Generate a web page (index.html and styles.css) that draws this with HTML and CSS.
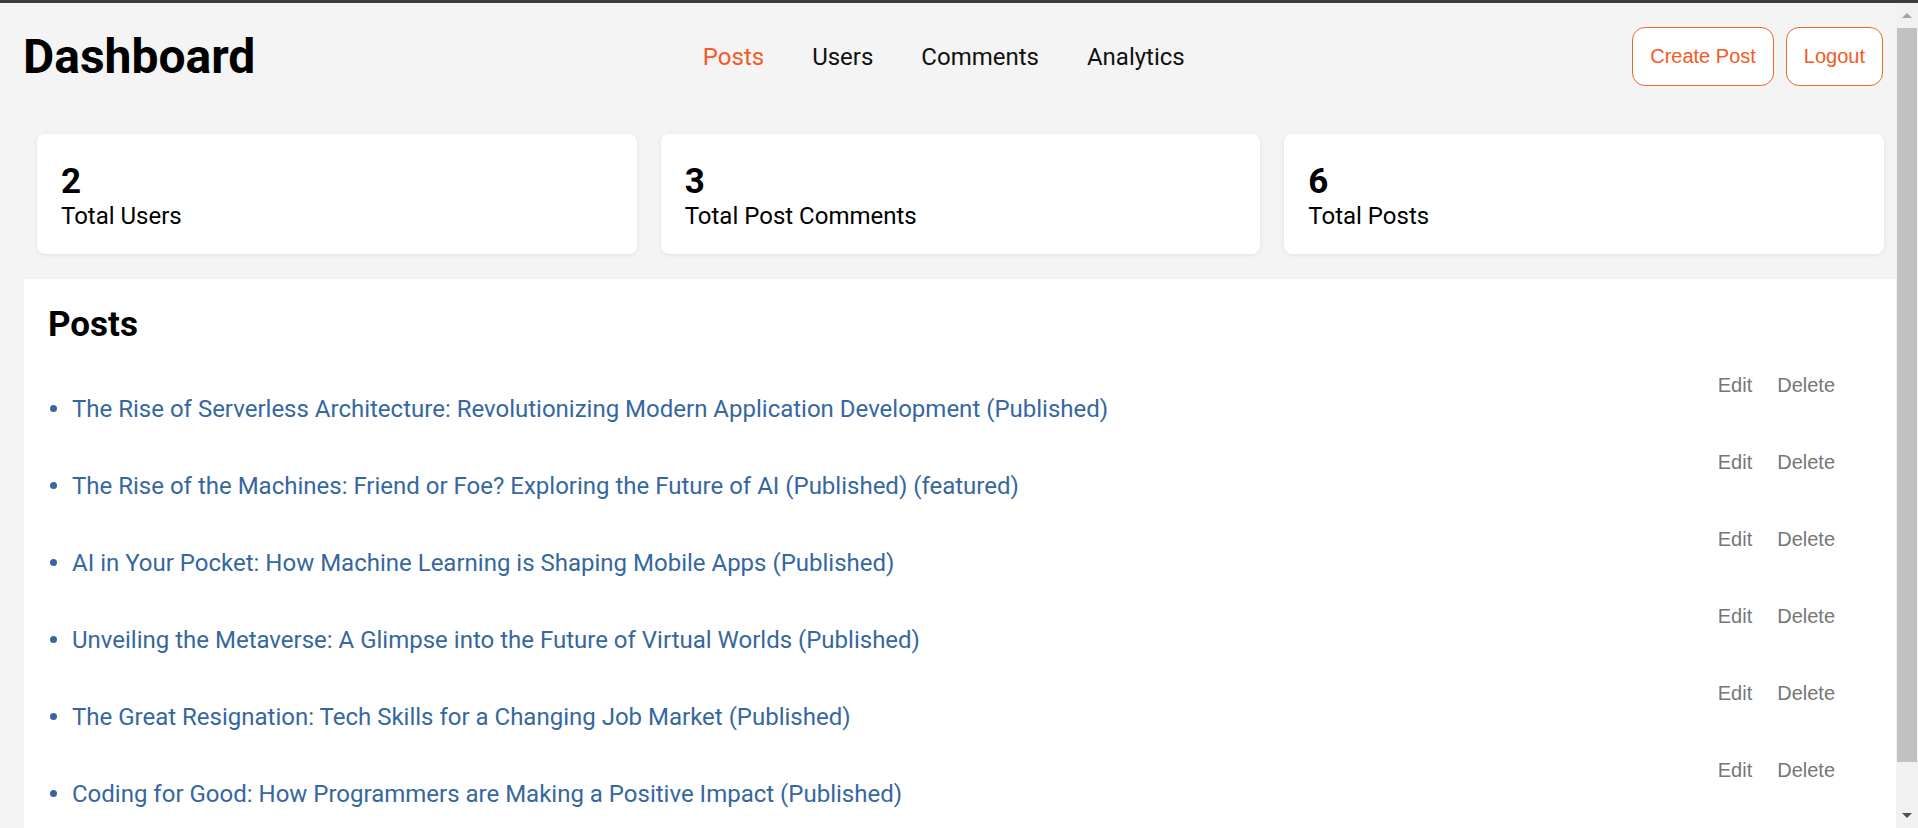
FILE: index.html
```html
<!DOCTYPE html>
<html lang="en">
<head>
<meta charset="utf-8">
<title>Dashboard</title>
<link rel="stylesheet" href="styles.css">
</head>
<body>
<div class="topbar"></div>
<div class="window">
  <div class="main">
    <header class="header">
      <h1 class="title">Dashboard</h1>
      <nav class="nav">
        <a class="nav-link active" href="#">Posts</a>
        <a class="nav-link" href="#">Users</a>
        <a class="nav-link" href="#">Comments</a>
        <a class="nav-link" href="#">Analytics</a>
      </nav>
      <div class="header-actions">
        <button class="btn-outline">Create Post</button>
        <button class="btn-outline">Logout</button>
      </div>
    </header>

    <section class="stats">
      <div class="stat-card"><div class="stat-num">2</div><div class="stat-label">Total Users</div></div>
      <div class="stat-card"><div class="stat-num">3</div><div class="stat-label">Total Post Comments</div></div>
      <div class="stat-card"><div class="stat-num">6</div><div class="stat-label">Total Posts</div></div>
    </section>

    <section class="panel">
      <h2 class="panel-title">Posts</h2>
      <ul class="post-list">
        <li class="post-item">
          <a class="post-title" href="#">The Rise of Serverless Architecture: Revolutionizing Modern Application Development (Published)</a>
          <div class="post-actions"><button class="btn-text">Edit</button><button class="btn-text">Delete</button></div>
        </li>
        <li class="post-item">
          <a class="post-title" href="#">The Rise of the Machines: Friend or Foe? Exploring the Future of AI (Published) (featured)</a>
          <div class="post-actions"><button class="btn-text">Edit</button><button class="btn-text">Delete</button></div>
        </li>
        <li class="post-item">
          <a class="post-title" href="#">AI in Your Pocket: How Machine Learning is Shaping Mobile Apps (Published)</a>
          <div class="post-actions"><button class="btn-text">Edit</button><button class="btn-text">Delete</button></div>
        </li>
        <li class="post-item">
          <a class="post-title" href="#">Unveiling the Metaverse: A Glimpse into the Future of Virtual Worlds (Published)</a>
          <div class="post-actions"><button class="btn-text">Edit</button><button class="btn-text">Delete</button></div>
        </li>
        <li class="post-item">
          <a class="post-title" href="#">The Great Resignation: Tech Skills for a Changing Job Market (Published)</a>
          <div class="post-actions"><button class="btn-text">Edit</button><button class="btn-text">Delete</button></div>
        </li>
        <li class="post-item">
          <a class="post-title" href="#">Coding for Good: How Programmers are Making a Positive Impact (Published)</a>
          <div class="post-actions"><button class="btn-text">Edit</button><button class="btn-text">Delete</button></div>
        </li>
      </ul>
    </section>
  </div>
  <div class="scrollbar">
    <div class="sb-arrow sb-up"></div>
    <div class="sb-thumb"></div>
    <div class="sb-rest"></div>
    <div class="sb-arrow sb-down"></div>
  </div>
</div>
</body>
</html>
```

FILE: styles.css
```css
* { box-sizing: border-box; }

html, body {
  margin: 0;
  padding: 0;
  height: 828px;
  overflow: hidden;
}

body {
  font-family: Roboto, "Noto Sans", Arial, sans-serif;
  background: #f4f4f4;
  color: #000;
}

.topbar {
  height: 3px;
  background: #3c3c3c;
}

.window {
  display: flex;
  height: 825px;
}

.main {
  flex: 1;
  display: flex;
  flex-direction: column;
  min-width: 0;
  overflow: hidden;
}

/* Header */
.header {
  display: flex;
  justify-content: space-between;
  align-items: center;
  padding: 24px 13px 24px 23px;
}

.title {
  margin: 0;
  font-size: 48px;
  font-weight: 700;
  line-height: normal;
}

.nav {
  display: flex;
  gap: 48px;
}

.nav-link {
  font-size: 24px;
  color: #111;
  text-decoration: none;
}

.nav-link.active {
  color: #f65a26;
}

.header-actions {
  display: flex;
  gap: 12px;
}

.btn-outline {
  font-family: "Liberation Sans", Arial, sans-serif;
  font-size: 20px;
  line-height: 23px;
  padding: 17px;
  background: #fff;
  color: #f35a24;
  border: 1px solid #f0652e;
  border-radius: 13px;
}

/* Stats */
.stats {
  display: grid;
  grid-template-columns: repeat(3, 1fr);
  gap: 24px;
  padding: 0 12px 0 37px;
  margin: 24px 0 25px;
}

.stat-card {
  background: #fff;
  border-radius: 8px;
  padding: 27px 24px 24px;
  box-shadow: 0 1px 4px rgba(0, 0, 0, 0.08);
}

.stat-num {
  font-size: 35px;
  font-weight: 700;
  line-height: 41px;
}

.stat-label {
  font-size: 24px;
  line-height: 28px;
}

/* Posts panel */
.panel {
  flex: 1;
  margin-left: 24px;
  background: #fff;
  padding: 25px 24px;
}

.panel-title {
  margin: 0;
  font-size: 35px;
  font-weight: 700;
  line-height: 41px;
}

.post-list {
  list-style: none;
  margin: 29px 0 0;
  padding: 0 37px 0 0;
  display: flex;
  flex-direction: column;
  gap: 28px;
}

.post-item {
  display: flex;
  justify-content: space-between;
  align-items: flex-start;
}

.post-title {
  margin-top: 21px;
  font-size: 24px;
  line-height: 28px;
  color: #36679f;
  text-decoration: none;
}

.post-title::before {
  content: "";
  display: inline-block;
  width: 7px;
  height: 7px;
  border-radius: 50%;
  background: #36679f;
  vertical-align: 5px;
  margin: 0 15px 0 2px;
}

.post-actions {
  display: flex;
  gap: 25px;
}

.btn-text {
  font-family: "Liberation Sans", Arial, sans-serif;
  font-size: 20px;
  line-height: 23px;
  padding: 0;
  border: 0;
  background: none;
  color: #767676;
}

/* Scrollbar */
.scrollbar {
  width: 22px;
  background: #f1f1f1;
  display: flex;
  flex-direction: column;
  align-items: center;
}

.sb-arrow {
  height: 25px;
  width: 22px;
  display: flex;
  align-items: center;
  justify-content: center;
}

.sb-arrow::before {
  content: "";
  width: 0;
  height: 0;
  border-left: 5px solid transparent;
  border-right: 5px solid transparent;
}

.sb-up::before {
  border-bottom: 5px solid #a3a3a3;
}

.sb-down::before {
  border-top: 5px solid #505050;
}

.sb-thumb {
  width: 20px;
  height: 734px;
  background: #c1c1c1;
}

.sb-rest {
  flex: 1;
}
```
